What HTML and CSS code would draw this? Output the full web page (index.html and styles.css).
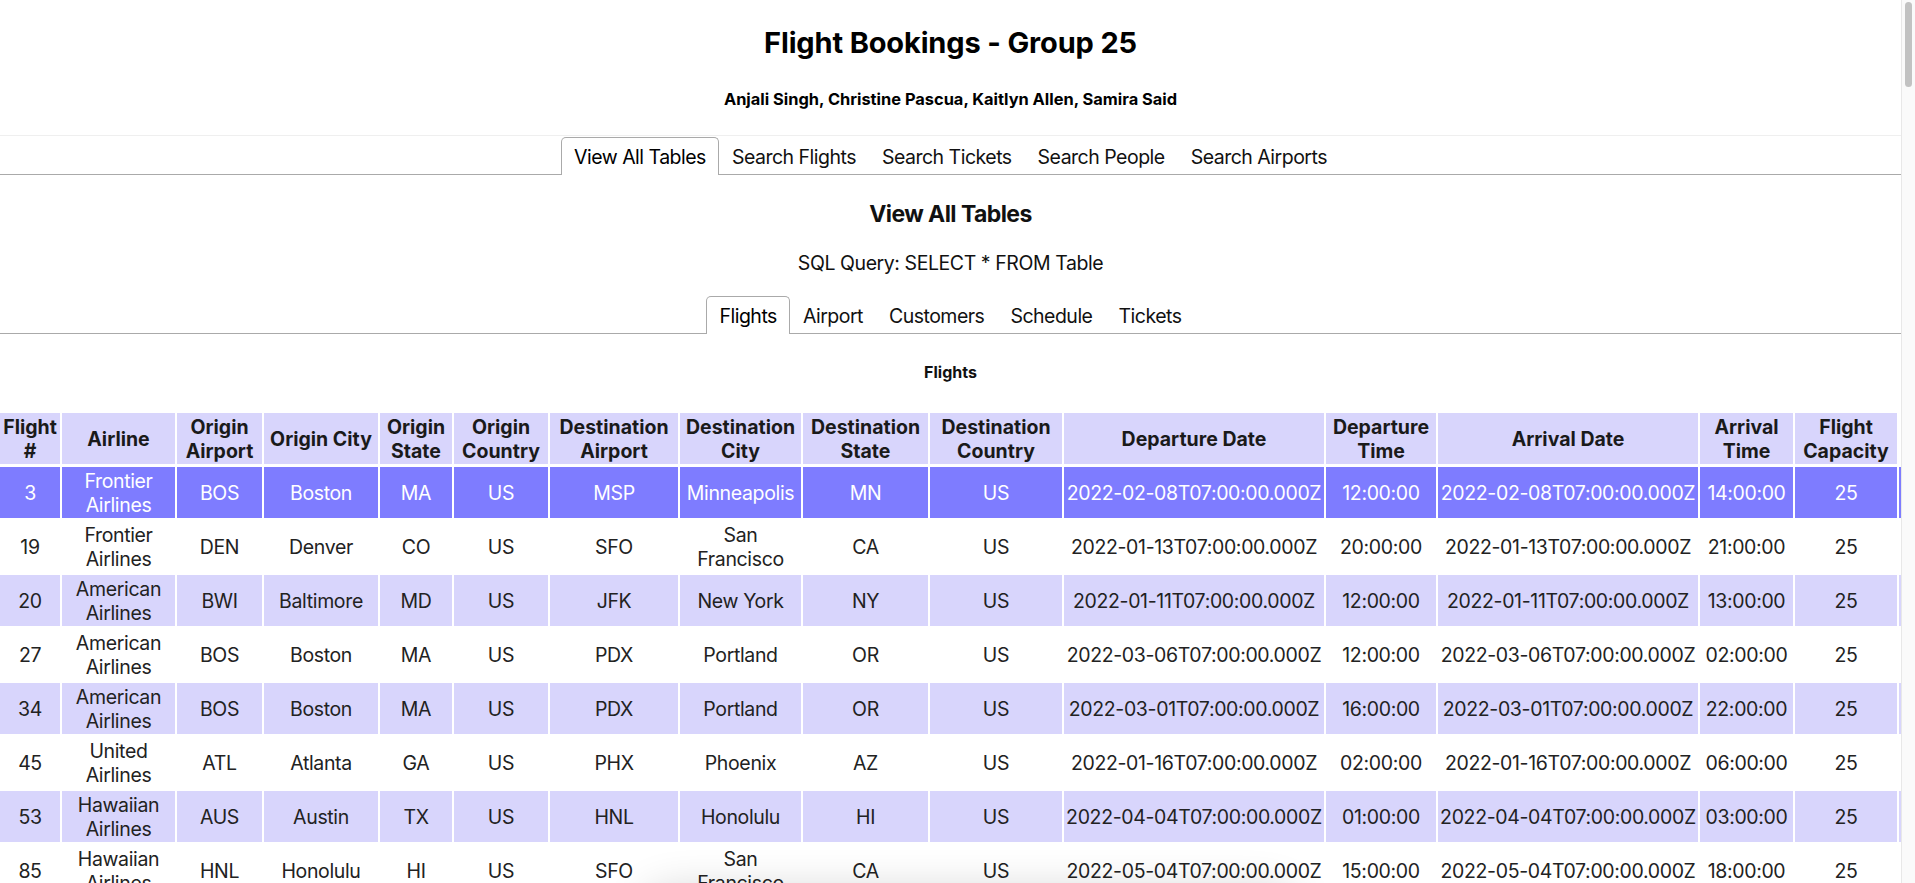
FILE: index.html
```html
<!DOCTYPE html>
<html lang="en">
<head>
<meta charset="utf-8">
<title>Flight Bookings - Group 25</title>
<link rel="stylesheet" href="styles.css">
</head>
<body>
<div class="window">
  <main class="page">
    <header class="site-header">
      <h1 class="site-title">Flight Bookings - Group 25</h1>
      <h5 class="site-authors">Anjali Singh, Christine Pascua, Kaitlyn Allen, Samira Said</h5>
    </header>

    <ul class="tab-list">
      <li class="tab is-selected">View All Tables</li>
      <li class="tab">Search Flights</li>
      <li class="tab">Search Tickets</li>
      <li class="tab">Search People</li>
      <li class="tab">Search Airports</li>
    </ul>

    <section class="panel">
      <h3 class="section-title">View All Tables</h3>
      <p class="query">SQL Query: SELECT * FROM Table</p>

      <ul class="tab-list inner">
        <li class="tab is-selected">Flights</li>
        <li class="tab">Airport</li>
        <li class="tab">Customers</li>
        <li class="tab">Schedule</li>
        <li class="tab">Tickets</li>
      </ul>

      <h5 class="table-caption">Flights</h5>

      <div class="table-wrap">
        <table class="flights">
          <colgroup>
            <col class="c1"><col class="c2"><col class="c3"><col class="c4"><col class="c5">
            <col class="c6"><col class="c7"><col class="c8"><col class="c9"><col class="c10">
            <col class="c11"><col class="c12"><col class="c13"><col class="c14"><col class="c15">
            <col class="c16">
          </colgroup>
          <thead>
            <tr>
              <th>Flight #</th><th>Airline</th><th>Origin Airport</th><th>Origin City</th><th>Origin State</th>
              <th>Origin Country</th><th>Destination Airport</th><th>Destination City</th><th>Destination State</th><th>Destination Country</th>
              <th>Departure Date</th><th>Departure Time</th><th>Arrival Date</th><th>Arrival Time</th><th>Flight Capacity</th>
            </tr>
          </thead>
          <tbody>
            <tr class="is-selected">
              <td>3</td><td>Frontier Airlines</td><td>BOS</td><td>Boston</td><td>MA</td><td>US</td><td>MSP</td><td>Minneapolis</td><td>MN</td><td>US</td>
              <td>2022-02-08T07:00:00.000Z</td><td>12:00:00</td><td>2022-02-08T07:00:00.000Z</td><td>14:00:00</td><td>25</td><td></td>
            </tr>
            <tr>
              <td>19</td><td>Frontier Airlines</td><td>DEN</td><td>Denver</td><td>CO</td><td>US</td><td>SFO</td><td>San Francisco</td><td>CA</td><td>US</td>
              <td>2022-01-13T07:00:00.000Z</td><td>20:00:00</td><td>2022-01-13T07:00:00.000Z</td><td>21:00:00</td><td>25</td><td></td>
            </tr>
            <tr>
              <td>20</td><td>American Airlines</td><td>BWI</td><td>Baltimore</td><td>MD</td><td>US</td><td>JFK</td><td>New York</td><td>NY</td><td>US</td>
              <td>2022-01-11T07:00:00.000Z</td><td>12:00:00</td><td>2022-01-11T07:00:00.000Z</td><td>13:00:00</td><td>25</td><td></td>
            </tr>
            <tr>
              <td>27</td><td>American Airlines</td><td>BOS</td><td>Boston</td><td>MA</td><td>US</td><td>PDX</td><td>Portland</td><td>OR</td><td>US</td>
              <td>2022-03-06T07:00:00.000Z</td><td>12:00:00</td><td>2022-03-06T07:00:00.000Z</td><td>02:00:00</td><td>25</td><td></td>
            </tr>
            <tr>
              <td>34</td><td>American Airlines</td><td>BOS</td><td>Boston</td><td>MA</td><td>US</td><td>PDX</td><td>Portland</td><td>OR</td><td>US</td>
              <td>2022-03-01T07:00:00.000Z</td><td>16:00:00</td><td>2022-03-01T07:00:00.000Z</td><td>22:00:00</td><td>25</td><td></td>
            </tr>
            <tr>
              <td>45</td><td>United Airlines</td><td>ATL</td><td>Atlanta</td><td>GA</td><td>US</td><td>PHX</td><td>Phoenix</td><td>AZ</td><td>US</td>
              <td>2022-01-16T07:00:00.000Z</td><td>02:00:00</td><td>2022-01-16T07:00:00.000Z</td><td>06:00:00</td><td>25</td><td></td>
            </tr>
            <tr>
              <td>53</td><td>Hawaiian Airlines</td><td>AUS</td><td>Austin</td><td>TX</td><td>US</td><td>HNL</td><td>Honolulu</td><td>HI</td><td>US</td>
              <td>2022-04-04T07:00:00.000Z</td><td>01:00:00</td><td>2022-04-04T07:00:00.000Z</td><td>03:00:00</td><td>25</td><td></td>
            </tr>
            <tr>
              <td>85</td><td>Hawaiian Airlines</td><td>HNL</td><td>Honolulu</td><td>HI</td><td>US</td><td>SFO</td><td>San Francisco</td><td>CA</td><td>US</td>
              <td>2022-05-04T07:00:00.000Z</td><td>15:00:00</td><td>2022-05-04T07:00:00.000Z</td><td>18:00:00</td><td>25</td><td></td>
            </tr>
            <tr>
              <td>92</td><td>United Airlines</td><td>SFO</td><td>San Francisco</td><td>CA</td><td>US</td><td>ATL</td><td>Atlanta</td><td>GA</td><td>US</td>
              <td>2022-05-10T07:00:00.000Z</td><td>09:00:00</td><td>2022-05-10T07:00:00.000Z</td><td>17:00:00</td><td>25</td><td></td>
            </tr>
          </tbody>
        </table>
      </div>
    </section>
  </main>
  <div class="scrollbar"><div class="scrollbar-thumb"></div></div>
</div>
<div class="bottom-shadow"></div>
</body>
</html>
```

FILE: styles.css
```css
* { box-sizing: border-box; }

html, body {
  margin: 0;
  padding: 0;
  height: 100%;
}

body {
  font-family: Inter, "Liberation Sans", sans-serif;
  color: #111;
  background: #fff;
  overflow: hidden;
}

.window {
  display: flex;
  height: 883px;
}

.page {
  flex: 1;
  min-width: 0;
  overflow: hidden;
}

.scrollbar {
  width: 14px;
  flex: none;
  border-left: 1px solid #e8e8e8;
  background: #fafafa;
  padding: 2px 3px 0 3px;
}

.scrollbar-thumb {
  height: 85px;
  border-radius: 4px;
  background: #c2c2c2;
}

/* header */
.site-header {
  border-bottom: 1px solid #efefef;
  padding: 26px 0;
  text-align: center;
}

.site-title {
  margin: 0;
  font-size: 29px;
  line-height: 34px;
  font-weight: 700;
  letter-spacing: -0.005em;
  color: #000;
}

.site-authors {
  margin: 29px 0 0;
  font-size: 16.4px;
  line-height: 20px;
  font-weight: 700;
  color: #000;
}

/* tabs */
.tab-list {
  display: flex;
  justify-content: center;
  align-items: flex-end;
  margin: 1px 0 0;
  padding: 0;
  list-style: none;
  border-bottom: 1px solid #aaa;
}

.tab {
  position: relative;
  margin-bottom: -1px;
  padding: 8px 12px 6px;
  border: 1px solid transparent;
  border-bottom: 0;
  border-radius: 5px 5px 0 0;
  font-size: 19.5px;
  line-height: 23px;
  letter-spacing: -0.026em;
  color: #111;
  cursor: pointer;
}

.tab.is-selected {
  background: #fff;
  border-color: #aaa;
  color: #000;
}

/* panel */
.section-title {
  margin: 25px 0 0;
  text-align: center;
  font-size: 23px;
  line-height: 28px;
  font-weight: 700;
  letter-spacing: -0.025em;
  color: #111;
}

.query {
  margin: 23px 0 0;
  text-align: center;
  font-size: 19.5px;
  line-height: 24px;
  letter-spacing: -0.022em;
  color: #111;
}

.tab-list.inner {
  margin-top: 21px;
}

.table-caption {
  margin: 28px 0 0;
  text-align: center;
  font-size: 16px;
  line-height: 20px;
  font-weight: 700;
  color: #111;
}

.table-wrap {
  margin-top: 28px;
  overflow: hidden;
}

/* table */
.flights {
  margin-left: -2px;
  border-spacing: 2px 3px;
  table-layout: fixed;
  width: 1963px;
}

.c1 { width: 60px; }
.c2 { width: 113px; }
.c3 { width: 85px; }
.c4 { width: 114px; }
.c5 { width: 72px; }
.c6 { width: 94px; }
.c7 { width: 128px; }
.c8 { width: 121px; }
.c9 { width: 125px; }
.c10 { width: 132px; }
.c11 { width: 260px; }
.c12 { width: 110px; }
.c13 { width: 260px; }
.c14 { width: 93px; }
.c15 { width: 102px; }
.c16 { width: 60px; }

.flights th,
.flights td {
  padding: 1.5px 1px;
  font-size: 19.5px;
  line-height: 24px;
  text-align: center;
  vertical-align: middle;
}

.flights th {
  background: #d8d5fc;
  font-weight: 700;
  color: #1a1a1a;
}

.flights td {
  color: #222;
  letter-spacing: -0.018em;
}

.flights tbody tr:nth-child(odd) {
  background: #d8d5fc;
}

.flights tbody tr.is-selected {
  background: #7e7cff;
}

.flights tbody tr.is-selected td {
  color: #fff;
}

/* floating element just below the viewport, only its shadow shows */
.bottom-shadow {
  position: fixed;
  left: 650px;
  top: 900px;
  width: 640px;
  height: 80px;
  border-radius: 24px;
  background: #fff;
  box-shadow: 0 0 40px 12px rgba(0, 0, 0, 0.16);
}
```
